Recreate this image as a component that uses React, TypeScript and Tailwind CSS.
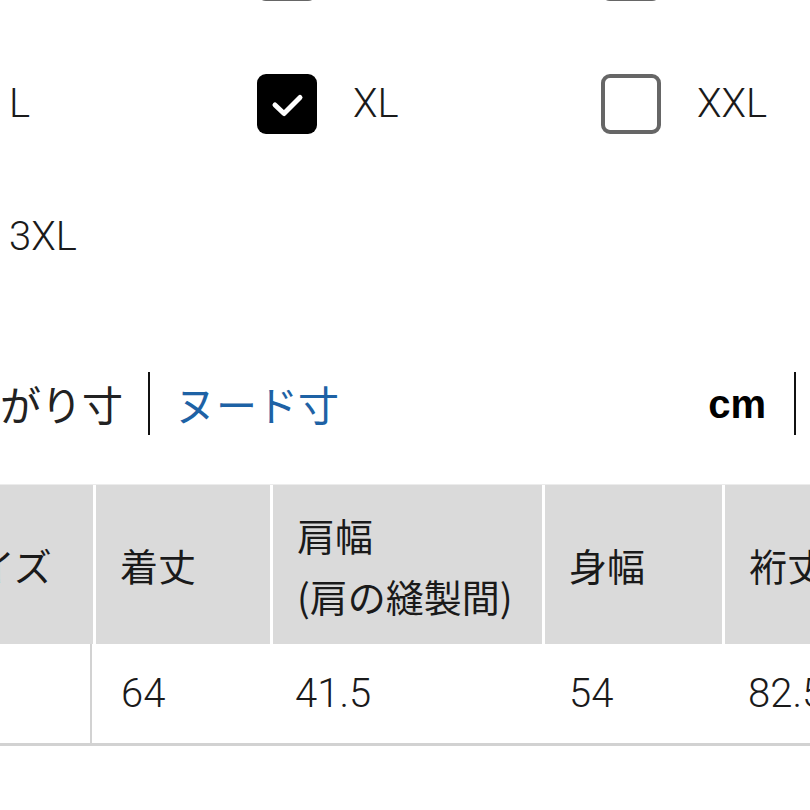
import React from 'react';

const sizes = [
  { label: '', checked: false },
  { label: '', checked: false },
  { label: '', checked: false },
  { label: 'L', checked: false },
  { label: 'XL', checked: true },
  { label: 'XXL', checked: false },
  { label: '3XL', checked: false },
];

const latin = { fontFamily: 'Roboto, "Noto Sans CJK JP", sans-serif' };
const jp = { fontFamily: '"Noto Sans CJK JP", "Noto Sans", sans-serif' };

const CheckBox = ({ checked }: { checked: boolean }) =>
  checked ? (
    <div className="w-[60px] h-[60px] rounded-[9px] bg-black flex items-center justify-center shrink-0">
      <svg width="60" height="60" viewBox="0 0 60 60">
        <path d="M18 31 L27 39.5 L43 23.5" fill="none" stroke="#fff" strokeWidth="5" strokeLinecap="round" strokeLinejoin="round" />
      </svg>
    </div>
  ) : (
    <div className="w-[60px] h-[60px] rounded-[9px] border-[4px] border-[#666666] bg-white shrink-0" />
  );

export default function App() {
  return (
    <div className="w-[810px] h-[810px] overflow-hidden bg-white text-[#1a1a1a]">
      {/* size checkboxes, first row mostly scrolled out of view */}
      <div className="grid grid-cols-[344px_344px_344px] ml-[-87px] mt-[-96px]">
        {sizes.map((s, i) => (
          <div key={i} className="h-[133px] flex items-center gap-[36px]">
            <CheckBox checked={s.checked} />
            <span className="text-[40px] font-light leading-none" style={latin}>
              {s.label}
            </span>
          </div>
        ))}
      </div>

      {/* unit tabs */}
      <div className="flex items-center h-[63px] mt-[69px]" style={jp}>
        <span className="text-[41px] leading-none ml-[-82px] text-[#222]">仕上がり寸</span>
        <div className="w-[2px] h-[63px] bg-[#111] ml-[25px]" />
        <span className="text-[41px] leading-none ml-[25px] text-[#1e62a5]">ヌード寸</span>
        <span
          className="ml-auto text-[40px] font-bold leading-none text-black"
          style={{ fontFamily: '"Liberation Sans", Arial, sans-serif' }}
        >
          cm
        </span>
        <div className="w-[2px] h-[63px] bg-[#111] ml-[28px] mr-[14px]" />
      </div>

      {/* size table */}
      <div className="mt-[49px] ml-[-85px] w-[1000px]">
        <div className="grid grid-cols-[178px_174px_269px_177px_200px] gap-x-[3px] h-[160px] border-t border-[#ececec]">
          <div className="bg-[#dadada] flex items-center pl-6 text-[38px]" style={jp}>サイズ</div>
          <div className="bg-[#dadada] flex items-center pl-6 text-[38px]" style={jp}>着丈</div>
          <div className="bg-[#dadada] flex flex-col justify-center pl-6 text-[38px] leading-[61px]" style={jp}>
            <span>肩幅</span>
            <span className="whitespace-nowrap">(肩の縫製間)</span>
          </div>
          <div className="bg-[#dadada] flex items-center pl-6 text-[38px]" style={jp}>身幅</div>
          <div className="bg-[#dadada] flex items-center pl-6 text-[38px]" style={jp}>裄丈</div>
        </div>
        <div
          className="grid grid-cols-[177px_179px_274px_179px_200px] h-[102px] border-b-[3px] border-[#d2d2d2] text-[40px] font-light"
          style={latin}
        >
          <div className="border-r-[2px] border-[#d2d2d2]" />
          <div className="flex items-center pl-[29px]">64</div>
          <div className="flex items-center pl-6">41.5</div>
          <div className="flex items-center pl-6">54</div>
          <div className="flex items-center pl-6">82.5</div>
        </div>
      </div>
    </div>
  );
}
